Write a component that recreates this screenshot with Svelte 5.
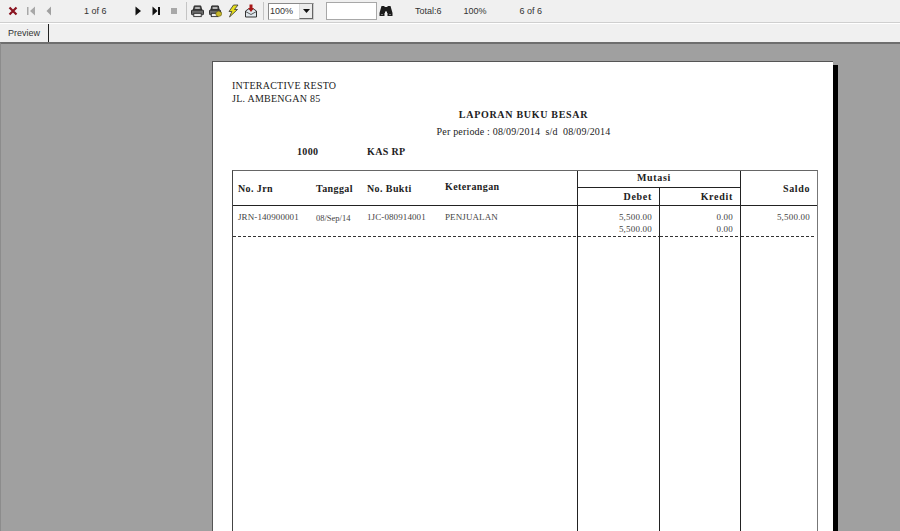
<script>
  const rows = [
    { jrn: 'JRN-140900001', tanggal: '08/Sep/14', bukti: '1JC-080914001', ket: 'PENJUALAN', debet: '5,500.00', kredit: '0.00', saldo: '5,500.00' }
  ];
</script>

<div class="app">
  <div class="toolbar">
    <button class="tool" aria-label="Close">
      <svg viewBox="0 0 12 12" width="12" height="12"><path d="M2.500 2.500l7 7M9.500 2.500l-7 7" stroke="#8a1420" stroke-width="2.200" /></svg>
    </button>
    <button class="tool" aria-label="First">
      <svg viewBox="0 0 12 12" width="12" height="12"><path d="M2 2h1.500v8H2zM10 1.500v9L5 6z" fill="#a8a8a8" /></svg>
    </button>
    <button class="tool" aria-label="Previous">
      <svg viewBox="0 0 12 12" width="12" height="12"><path d="M8 1.500v9L3.500 6z" fill="#a0a0a0" /></svg>
    </button>
    <span class="label pager">1 of 6</span>
    <button class="tool" aria-label="Next">
      <svg viewBox="0 0 12 12" width="12" height="12"><path d="M3.500 1.500v9L9 6z" fill="#111" /></svg>
    </button>
    <button class="tool" aria-label="Last">
      <svg viewBox="0 0 12 12" width="12" height="12"><path d="M2.500 1.500v9L7.500 6zM8 2h2v8H8z" fill="#111" /></svg>
    </button>
    <button class="tool" aria-label="Stop">
      <svg viewBox="0 0 12 12" width="12" height="12"><rect x="3" y="3" width="6" height="6" fill="#a8a8a8" /></svg>
    </button>
    <span class="sep"></span>
    <button class="tool" aria-label="Print">
      <svg viewBox="0 0 14 14" width="13" height="13">
        <path d="M3.500 1h7l1 4.500h-9z" fill="#555" stroke="#222" />
        <rect x="4.500" y="2.500" width="5" height="1.500" fill="#ddd" />
        <rect x=".5" y="5.500" width="13" height="5" rx="1" fill="#6a6a6a" stroke="#222" />
        <rect x="3" y="9" width="8" height="3.500" fill="#eee" stroke="#333" />
      </svg>
    </button>
    <button class="tool" aria-label="Print setup">
      <svg viewBox="0 0 14 14" width="13" height="13">
        <path d="M3 1h7l1 4.500H2z" fill="#555" stroke="#222" />
        <rect x="4" y="2.500" width="5" height="1.500" fill="#ddd" />
        <rect x=".5" y="5.500" width="12" height="5" rx="1" fill="#6a6a6a" stroke="#222" />
        <rect x="2.500" y="9" width="7" height="3.500" fill="#eee" stroke="#333" />
        <path d="M7.500 8l3-1.500 3.500 2-1 3-3 1-2.500-1.500z" fill="#c8b82a" stroke="#5b5312" stroke-width=".6" />
      </svg>
    </button>
    <button class="tool" aria-label="Export fast">
      <svg viewBox="0 0 14 14" width="14" height="14"><path d="M7.500 1L3 7.500h2.800L3.500 13 11.500 5.500H8.500L12 1z" fill="#e6de1c" stroke="#333" stroke-width=".8" /></svg>
    </button>
    <button class="tool" aria-label="Export">
      <svg viewBox="0 0 14 14" width="14" height="14">
        <path d="M1.500 7l3-2h5l3 2v6h-11z" fill="#dfe7ec" stroke="#333" />
        <path d="M1.500 7.500L7 10.500l5.500-3" fill="none" stroke="#333" stroke-width=".8" />
        <path d="M5.500 .5h3v3.500H10L7 8 4 4h1.500z" fill="#a81818" />
      </svg>
    </button>
    <span class="sep"></span>
    <div class="combo">
      <span class="combo-value">100%</span>
      <span class="combo-arrow"><svg viewBox="0 0 7 4" width="7" height="4"><path d="M0 0h7L3.500 4z" fill="#111" /></svg></span>
    </div>
    <div class="search"></div>
    <button class="tool" aria-label="Find">
      <svg viewBox="0 0 14 12" width="14" height="12">
        <path d="M2.500 1h3v1h3V1h3l2 7v3h-5V8H8V6.500H6V8h-.500v3H.500V8z" fill="#1c1c1c" />
        <path d="M2 9h2v1H2zM10 9h2v1h-2z" fill="#777" />
      </svg>
    </button>
    <span class="label total">Total:6</span>
    <span class="label zoom">100%</span>
    <span class="label count">6 of 6</span>
  </div>

  <div class="tabbar">
    <div class="tab">Preview</div>
  </div>

  <div class="viewer">
    <div class="page">
      <div class="company">
        <div>INTERACTIVE RESTO</div>
        <div>JL. AMBENGAN 85</div>
      </div>
      <div class="title">LAPORAN BUKU BESAR</div>
      <div class="period">Per periode : 08/09/2014&nbsp; s/d&nbsp; 08/09/2014</div>
      <div class="account">
        <span class="acc-code">1000</span>
        <span class="acc-name">KAS RP</span>
      </div>

      <div class="report">
        <div class="head-left">
          <span class="c-jrn">No. Jrn</span>
          <span class="c-tgl">Tanggal</span>
          <span class="c-bukti">No. Bukti</span>
          <span class="c-ket up">Keterangan</span>
        </div>
        <div class="head-mutasi">
          <div class="mutasi">Mutasi</div>
          <div class="mutasi-sub">
            <span class="debet">Debet</span>
            <span class="kredit">Kredit</span>
          </div>
        </div>
        <div class="head-saldo">Saldo</div>

        {#each rows as row}
          <div class="body-left dashed">
            <span class="c-jrn">{row.jrn}</span>
            <span class="c-tgl date">{row.tanggal}</span>
            <span class="c-bukti">{row.bukti}</span>
            <span class="c-ket">{row.ket}</span>
          </div>
          <div class="num dashed">{row.debet}<br />{row.debet}</div>
          <div class="num dashed">{row.kredit}<br />{row.kredit}</div>
          <div class="num dashed n-saldo">{row.saldo}</div>
        {/each}

        <div class="fill"></div>
        <div class="fill line"></div>
        <div class="fill line"></div>
        <div class="fill line"></div>
      </div>
    </div>
  </div>
</div>

<style>
  :global(body) {
    margin: 0;
    overflow: hidden;
  }
  .app {
    width: 900px;
    height: 531px;
    display: flex;
    flex-direction: column;
    overflow: hidden;
    background: #f0f0f0;
    font-family: "Liberation Sans", Arial, sans-serif;
  }

  .toolbar {
    height: 22px;
    flex: none;
    display: flex;
    align-items: center;
    padding-left: 4px;
    border-bottom: 1px solid #cfcfcf;
    font-size: 9px;
    color: #333;
  }
  .tool {
    width: 18px;
    height: 20px;
    padding: 0;
    border: 0;
    background: none;
    display: flex;
    align-items: center;
    justify-content: center;
  }
  .label {
    white-space: nowrap;
  }
  .pager {
    width: 71px;
    padding-left: 26px;
    box-sizing: border-box;
  }
  .sep {
    width: 1px;
    height: 18px;
    margin: 0 1px 0 3px;
    background: #c4c4c4;
  }
  .combo {
    width: 46px;
    height: 17px;
    margin-left: 3px;
    box-sizing: border-box;
    display: flex;
    background: #fff;
    border: 1px solid #8a8a8a;
    border-right-color: #ccc;
    border-bottom-color: #ccc;
  }
  .combo-value {
    flex: 1;
    padding-left: 1px;
    line-height: 15px;
  }
  .combo-arrow {
    width: 14px;
    display: flex;
    align-items: center;
    justify-content: center;
    background: #ececec;
    border-left: 1px solid #ddd;
    border-right: 1px solid #666;
    border-bottom: 1px solid #666;
    box-sizing: border-box;
  }
  .search {
    width: 51px;
    height: 18px;
    margin-left: 12px;
    box-sizing: border-box;
    background: #fff;
    border: 1px solid #a8a8a8;
  }
  .total { margin-left: 20px; }
  .zoom { margin-left: 22px; }
  .count { margin-left: 33px; }

  .tabbar {
    height: 18px;
    flex: none;
    display: flex;
    border-top: 1px solid #fff;
    background: #f0f0f0;
  }
  .tab {
    width: 48px;
    text-align: center;
    font-size: 9px;
    line-height: 18px;
    color: #333;
    border-right: 1px solid #222;
  }

  .viewer {
    flex: 1;
    min-height: 0;
    background: #a0a0a0;
    border-top: 2px solid #6e6e6e;
    border-left: 1px solid #8c8c8c;
    padding: 17px 0 0 211px;
  }
  .page {
    width: 621px;
    height: 600px;
    box-sizing: border-box;
    background: #fff;
    border: 1px solid #555;
    border-right: 0;
    box-shadow: 5px 4px 0 #000;
    padding: 18px 0 0 19px;
    font-family: "Liberation Serif", "Times New Roman", serif;
    color: #222;
    font-size: 10px;
  }

  .company {
    line-height: 12.500px;
    letter-spacing: 0.25px;
  }
  .title {
    width: 583px;
    margin-top: 3px;
    text-align: center;
    font-weight: bold;
    line-height: 13px;
    letter-spacing: 0.7px;
  }
  .period {
    width: 583px;
    margin-top: 4px;
    text-align: center;
    line-height: 13px;
    letter-spacing: 0.18px;
  }
  .account {
    display: flex;
    margin-top: 7px;
    padding-left: 65px;
    font-weight: bold;
    line-height: 13px;
    letter-spacing: 0.35px;
  }
  .acc-code { width: 70px; }

  .report {
    width: 586px;
    margin-top: 12px;
    box-sizing: border-box;
    display: grid;
    grid-template-columns: 344px 82px 81px 77px;
    grid-template-rows: 35px 31px 300px;
    border-top: 1px solid #666;
    border-left: 1px solid #444;
    border-right: 1px solid #777;
    line-height: 12px;
  }
  .head-left, .body-left {
    display: grid;
    grid-template-columns: 5px 78px 51px 78px 1fr;
  }
  .head-left {
    font-weight: bold;
    letter-spacing: 0.4px;
    border-bottom: 1px solid #222;
    align-items: start;
    padding-top: 12px;
    box-sizing: border-box;
  }
  .c-jrn { grid-column: 2; }
  .c-tgl { grid-column: 3; }
  .c-bukti { grid-column: 4; }
  .c-ket { grid-column: 5; }
  .up { margin-top: -2px; }
  .head-mutasi {
    grid-column: 2 / 4;
    display: flex;
    flex-direction: column;
    border-left: 1px solid #222;
    border-bottom: 1px solid #222;
    font-weight: bold;
    letter-spacing: 0.7px;
  }
  .mutasi {
    height: 16px;
    line-height: 14px;
    text-align: center;
    padding-right: 10px;
    border-bottom: 1px solid #222;
  }
  .mutasi-sub {
    flex: 1;
    display: grid;
    grid-template-columns: 82px 1fr;
    line-height: 17px;
    text-align: right;
  }
  .debet {
    padding-right: 7px;
    border-right: 1px solid #222;
  }
  .kredit { padding-right: 7px; }
  .head-saldo {
    border-left: 1px solid #222;
    border-bottom: 1px solid #222;
    text-align: right;
    padding: 12px 7px 0 0;
    font-weight: bold;
    letter-spacing: 0.6px;
  }

  .dashed {
    background: repeating-linear-gradient(90deg, #333 0 3px, transparent 3px 5px) left bottom / 100% 1px no-repeat;
  }
  .body-left {
    padding-top: 5px;
    font-size: 9px;
    letter-spacing: 0.1px;
    color: #444;
  }
  .date {
    font-size: 8.500px;
    letter-spacing: 0;
    padding-top: 1px;
  }
  .num {
    padding: 5px 7px 0 0;
    text-align: right;
    font-size: 9px;
    letter-spacing: 0.2px;
    color: #444;
    border-left: 1px solid #222;
  }
  .n-saldo {
    background-size: calc(100% - 2px) 1px;
  }
  .line { border-left: 1px solid #222; }
</style>
